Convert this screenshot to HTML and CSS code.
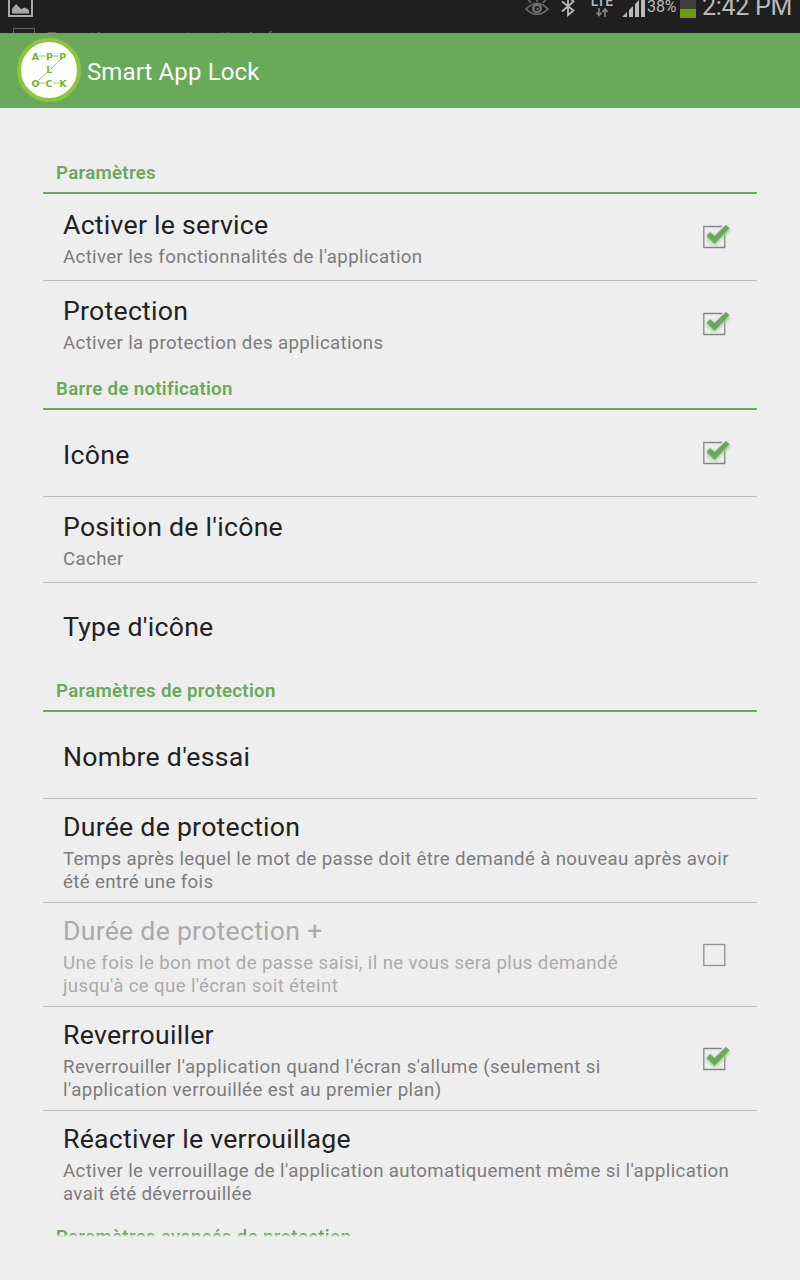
FILE: index.html
```html
<!DOCTYPE html>
<html lang="fr">
<head>
<meta charset="utf-8">
<title>Smart App Lock</title>
<link rel="stylesheet" href="styles.css">
</head>
<body>
<svg class="defs" width="0" height="0" aria-hidden="true">
  <defs>
    <filter id="glow" x="-50%" y="-50%" width="200%" height="200%"><feGaussianBlur stdDeviation="1.800"/></filter>
    <symbol id="box" viewBox="0 0 36 36"><rect x="5.800" y="7.500" width="21" height="21" fill="none" stroke="#969696" stroke-width="1.400"/></symbol>
    <symbol id="checked" viewBox="0 0 36 36">
      <path d="M5.800 7.500H26.800V28.500H5.800z" fill="none" stroke="#858585" stroke-width="1.300"/>
      <path d="M24 6h5v9h-5z" fill="#eee"/>
      <path d="M10 16l6.500 6L30 9" fill="none" stroke="#9ad68e" stroke-width="7" filter="url(#glow)"/>
      <path d="M9 16.800l3-3.300 4.600 4L28 6.300l3 3L16.600 24.300z" fill="#69a95a" stroke="#7b9c74" stroke-width=".8"/>
    </symbol>
  </defs>
</svg>
<div class="screen">
  <div class="status">
    <svg class="picture" width="26" height="17" viewBox="0 0 26 17"><path d="M1 0v16h23V0" fill="none" stroke="#a8a8a8" stroke-width="2"/><path d="M4 13.500V9l4-5 5 5 4-1.500 4 2.500v3.500z" fill="#a8a8a8"/></svg>
    <div class="ghost"><span class="ghost-box"></span><span class="ghost-text">Fonctionnement optimisé</span></div>
    <div class="tray">
      <svg class="eye" width="24" height="17" viewBox="0 0 24 17"><path d="M1 9Q12-2 23 9Q12 19.500 1 9z" fill="none" stroke="#6e6e6e" stroke-width="1.600"/><circle cx="12" cy="8.500" r="5" fill="#6e6e6e"/><circle cx="12" cy="8.500" r="2.500" fill="#1f1f1f"/><circle cx="12.500" cy="9" r="1" fill="#888"/><path d="M6 3L3.500 0M18 3l2.500-3M12 2v-3" stroke="#6e6e6e" stroke-width="1.600"/></svg>
      <svg class="bluetooth" width="14" height="17" viewBox="0 0 14 17"><path d="M1 1.500L12.500 10.500 7 15V-4L12.500 1.500 1 11.500" fill="none" stroke="#b9b9b9" stroke-width="1.800"/></svg>
      <div class="lte"><span>LTE</span><svg width="12" height="9" viewBox="0 0 12 9"><path d="M3 0v7M.5 4.500L3 7.500 5.500 4.500M9 9V2M6.500 4L9 1l2.500 3" fill="none" stroke="#808080" stroke-width="1.700"/></svg></div>
      <svg class="signal" width="23" height="17" viewBox="0 0 23 17"><path d="M0 17l5-5v5zM7 10l4-4v11H7zM13 4l4-4v17h-4zM19 0h4v17h-4z" fill="#b9b9b9"/></svg>
      <span class="percent">38%</span>
      <span class="battery"></span>
      <span class="clock">2:42 PM</span>
    </div>
  </div>
  <header class="bar">
    <svg class="logo" width="64" height="64" viewBox="0 0 64 64">
      <circle cx="32" cy="32" r="30" fill="#fff" stroke="#8cc63f" stroke-width="4"/>
      <path d="M22 18h7M36 18h6M43 22L34 31M30 34.500L22 42M22 45h6M36 45h6" fill="none" stroke="#9ccc6a" stroke-width="1"/>
      <g class="logo-letters"><text x="18.500" y="21.500">A</text><text x="32.500" y="21.500">P</text><text x="45.800" y="21.500">P</text><text x="32.300" y="35">L</text><text x="18.500" y="48.700">O</text><text x="32" y="48.700">C</text><text x="46" y="48.700">K</text></g>
    </svg>
    <h1>Smart App Lock</h1>
  </header>
  <main class="settings">
    <h2>Paramètres</h2>
    <section>
      <div class="row"><div class="text"><div class="title">Activer le service</div><div class="sub">Activer les fonctionnalités de l'application</div></div><svg class="check"><use href="#checked"/></svg></div>
      <div class="row"><div class="text"><div class="title">Protection</div><div class="sub">Activer la protection des applications</div></div><svg class="check"><use href="#checked"/></svg></div>
    </section>
    <h2>Barre de notification</h2>
    <section>
      <div class="row"><div class="text single"><div class="title">Icône</div></div><svg class="check"><use href="#checked"/></svg></div>
      <div class="row"><div class="text"><div class="title">Position de l'icône</div><div class="sub">Cacher</div></div></div>
      <div class="row"><div class="text single"><div class="title">Type d'icône</div></div></div>
    </section>
    <h2>Paramètres de protection</h2>
    <section>
      <div class="row"><div class="text single"><div class="title">Nombre d'essai</div></div></div>
      <div class="row tall"><div class="text"><div class="title">Durée de protection</div><div class="sub">Temps après lequel le mot de passe doit être demandé à nouveau après avoir<br>été entré une fois</div></div></div>
      <div class="row tall disabled"><div class="text"><div class="title">Durée de protection +</div><div class="sub">Une fois le bon mot de passe saisi, il ne vous sera plus demandé<br>jusqu'à ce que l'écran soit éteint</div></div><svg class="check"><use href="#box"/></svg></div>
      <div class="row tall"><div class="text"><div class="title">Reverrouiller</div><div class="sub wide">Reverrouiller l'application quand l'écran s'allume (seulement si<br>l'application verrouillée est au premier plan)</div></div><svg class="check"><use href="#checked"/></svg></div>
      <div class="row tall"><div class="text"><div class="title">Réactiver le verrouillage</div><div class="sub">Activer le verrouillage de l'application automatiquement même si l'application<br>avait été déverrouillée</div></div></div>
    </section>
    <h2 class="cut">Paramètres avancés de protection</h2>
  </main>
</div>
</body>
</html>
```
FILE: styles.css
```css
* { box-sizing: border-box; }
body { margin: 0; background: #eee; font-family: Roboto, sans-serif; }
.defs { position: absolute; }
.screen { width: 800px; height: 1280px; overflow: hidden; background: #eee; }
.status { height: 33px; background: #1f1f1f; display: flex; justify-content: space-between; overflow: hidden; position: relative; }
.picture { margin-left: 8px; }
.ghost { position: absolute; left: 13px; top: 28px; display: flex; gap: 11px; color: #5a5a5a; font-size: 19px; line-height: 22px; letter-spacing: .55px; }
.ghost-box { width: 22px; height: 22px; border: 1px solid #666; }
.tray { display: flex; align-items: flex-start; color: #b9b9b9; }
.eye { margin: 0 12px 0 -2px; }
.bluetooth { margin-right: 15px; }
.lte { width: 24px; display: flex; flex-direction: column; align-items: center; font-size: 14px; font-weight: 500; line-height: 14px; }
.lte span { margin-top: -6px; }
.lte svg { margin-left: -1px; }
.signal { margin-left: 8px; }
.percent { font-size: 16px; line-height: 16px; width: 33px; margin: -1px 0 0 2px; letter-spacing: -.1px; white-space: nowrap; }
.battery { width: 16px; height: 18px; background: linear-gradient(#414141 50%, #709b0c 50%); }
.clock { width: 98px; margin: -8px 0 0 6px; font-size: 25px; line-height: 29px; letter-spacing: -.3px; white-space: nowrap; }
.bar { height: 75px; background: #69a95a; display: flex; align-items: center; padding-left: 17px; }
.logo { margin: -1px 6px 0 0; }
.logo-letters { font: bold 9.5px "DejaVu Sans", sans-serif; fill: #76b62b; text-anchor: middle; }
h1 { margin: 2px 0 0; color: #fff; font-size: 24px; font-weight: 400; line-height: 30px; letter-spacing: .12px; }
.settings { padding: 43px 43px 0; }
h2 { margin: 0; height: 43px; padding: 10px 13px 0; border-bottom: 2px solid #69a95a; color: #69a95a; font-size: 18.67px; font-weight: 600; line-height: 24px; letter-spacing: .3px; white-space: nowrap; }
.row { height: 86px; padding: 0 20px; display: flex; align-items: center; justify-content: space-between; border-bottom: 1px solid #bdbdbd; }
.row:first-child { height: 87px; }
.row:last-child { border-color: transparent; }
.row.tall { height: 104px; }
.text { padding-top: 2px; }
.row:first-child .text, .tall .text { padding-top: 4px; }
.row:first-child .single { padding-top: 5px; }
.single { padding-top: 3px; }
.title { color: #222; font-size: 26.67px; line-height: 34px; letter-spacing: .25px; white-space: nowrap; }
.sub { color: #7c7c7c; font-size: 18.67px; line-height: 23px; letter-spacing: .36px; margin-top: 4px; white-space: nowrap; }
.wide { letter-spacing: .42px; }
.text .title { margin-top: -1px; }
.disabled .title, .disabled .sub { color: #aaa; }
.check { width: 36px; height: 36px; flex: none; margin-right: 3px; }
.cut { height: 22px; overflow: hidden; border: 0; -webkit-mask-image: linear-gradient(#000 85%, transparent); mask-image: linear-gradient(#000 85%, transparent); }
```
